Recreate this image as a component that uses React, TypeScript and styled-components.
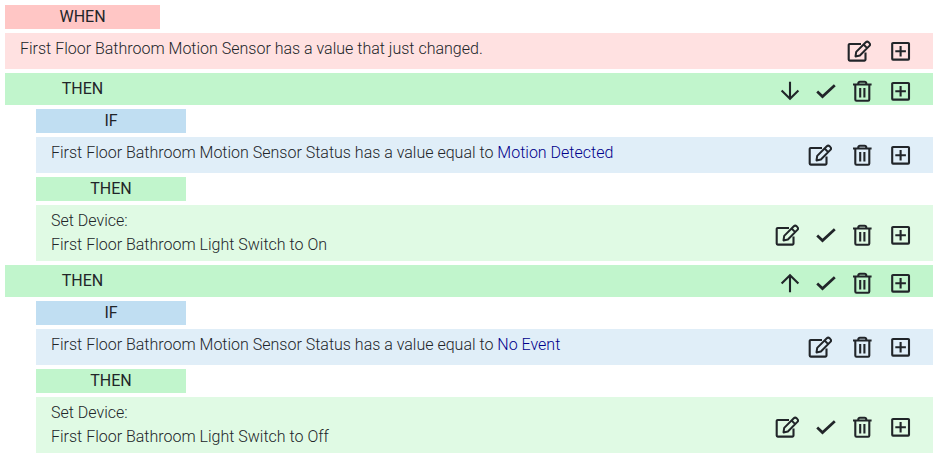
import React from 'react';
import styled, { createGlobalStyle } from 'styled-components';

const GlobalStyle = createGlobalStyle`
  *, *::before, *::after { box-sizing: border-box; }
  body {
    margin: 0;
    background: #fff;
    color: #212529;
    font: 300 16px/24px Roboto, sans-serif;
  }
`;

type Tone = 'red' | 'green' | 'blue';
const strong: Record<Tone, string> = { red: '#ffc6c5', green: '#c1f5cc', blue: '#c0def2' };
const soft: Record<Tone, string> = { red: '#ffe1e1', green: '#e0fae4', blue: '#e0eef8' };

const Rule = styled.main`
  display: flex;
  flex-direction: column;
  gap: 4px;
  padding: 5px;
`;

const Branch = styled.section`
  display: flex;
  flex-direction: column;
  gap: 4px;
`;

const Nested = styled.div`
  display: flex;
  flex-direction: column;
  gap: 4px;
  margin-left: 31px;
`;

const Tag = styled.h3<{ $tone: Tone; $wide?: boolean }>`
  width: ${(p) => (p.$wide ? '155px' : '150px')};
  margin: 0;
  font-size: 16px;
  font-weight: 400;
  text-align: center;
  background: ${(p) => strong[p.$tone]};
`;

const Bar = styled.header<{ $tone: Tone }>`
  display: flex;
  justify-content: space-between;
  padding: 4px 13px 0 0;
  background: ${(p) => strong[p.$tone]};
`;

const Row = styled.div<{ $tone: Tone }>`
  display: flex;
  justify-content: space-between;
  align-items: center;
  padding: 4px 13px 4px 15px;
  background: ${(p) => soft[p.$tone]};
`;

const Sentence = styled.p`
  margin: 0;
  align-self: flex-start;
`;

const Value = styled.span`
  color: #00008b;
`;

const Actions = styled.div<{ $low?: boolean }>`
  display: flex;
  flex-shrink: 0;
  padding-top: ${(p) => (p.$low ? '4px' : '0')};
`;

const IconButton = styled.button<{ $width: number }>`
  display: flex;
  align-items: center;
  justify-content: center;
  width: ${(p) => p.$width}px;
  height: 28px;
  padding: 0;
  border: 0;
  background: none;
  color: inherit;
  cursor: pointer;
`;

const Glyph = styled.svg`
  width: 24px;
  height: 24px;
  flex-shrink: 0;
  fill: none;
  stroke: currentColor;
  stroke-width: 2.1;
  stroke-linejoin: round;
`;

const icons = {
  edit: {
    label: 'Edit',
    width: 44,
    art: (
      <>
        <path d="M14 5H2.7a1 1 0 0 0-1 1v14.6a1 1 0 0 0 1 1h14.8a1 1 0 0 0 1-1v-7" />
        <path
          strokeWidth="2"
          d="M8.5 17.4l.7-4.5L18.8 3.3a2 2 0 0 1 2.8 0l.8.8a2 2 0 0 1 0 2.8L12.9 16.5zM16.6 5.5l3.6 3.6"
        />
      </>
    ),
  },
  down: {
    label: 'Move down',
    width: 39,
    art: <path strokeLinejoin="miter" d="M12 2.7V20M3.6 11.4l8.4 8.4 8.4-8.4" />,
  },
  up: {
    label: 'Move up',
    width: 39,
    art: <path strokeLinejoin="miter" d="M12 21.3V4M3.6 12.6L12 4.2l8.4 8.4" />,
  },
  check: {
    label: 'Enabled',
    width: 33,
    art: <path strokeWidth="2.7" strokeLinejoin="miter" d="M3.2 12.6l5.3 5L20.8 6.2" />,
  },
  trash: {
    label: 'Delete',
    width: 39,
    art: (
      <path d="M3 5.5h18.6M8.3 5V4.4A1.6 1.6 0 0 1 9.9 2.8h4.8a1.6 1.6 0 0 1 1.6 1.6V5M5.3 5.5v15a1.2 1.2 0 0 0 1.2 1.2h11.6a1.2 1.2 0 0 0 1.2-1.2v-15M10.2 9v9.6M14.4 9v9.6" />
    ),
  },
  plus: {
    label: 'Add',
    width: 39,
    art: (
      <>
        <rect x="3.2" y="4" width="16.8" height="16.6" rx="0.8" />
        <path d="M6.3 12.3h10.6M11.6 7v10.6" />
      </>
    ),
  },
};
type Action = keyof typeof icons;

function ActionList({ items, low }: { items: Action[]; low?: boolean }) {
  return (
    <Actions $low={low}>
      {items.map((name) => {
        const { label, width, art } = icons[name];
        return (
          <IconButton key={name} type="button" aria-label={label} $width={width}>
            <Glyph viewBox="0 0 24 24" aria-hidden="true">{art}</Glyph>
          </IconButton>
        );
      })}
    </Actions>
  );
}

function ThenBranch({ move, value, state }: { move: Action; value: string; state: string }) {
  return (
    <Branch>
      <Bar $tone="green">
        <Tag $tone="green" $wide>THEN</Tag>
        <ActionList items={[move, 'check', 'trash', 'plus']} />
      </Bar>
      <Nested>
        <Tag $tone="blue">IF</Tag>
        <Row $tone="blue">
          <Sentence>
            First Floor Bathroom Motion Sensor Status has a value equal to <Value>{value}</Value>
          </Sentence>
          <ActionList items={['edit', 'trash', 'plus']} />
        </Row>
        <Tag $tone="green">THEN</Tag>
        <Row $tone="green">
          <Sentence>
            Set Device:
            <br />
            First Floor Bathroom Light Switch to {state}
          </Sentence>
          <ActionList low items={['edit', 'check', 'trash', 'plus']} />
        </Row>
      </Nested>
    </Branch>
  );
}

export default function App() {
  return (
    <>
      <GlobalStyle />
      <Rule>
        <Tag $tone="red" $wide>WHEN</Tag>
        <Row $tone="red">
          <Sentence>First Floor Bathroom Motion Sensor has a value that just changed.</Sentence>
          <ActionList items={['edit', 'plus']} />
        </Row>
        <ThenBranch move="down" value="Motion Detected" state="On" />
        <ThenBranch move="up" value="No Event" state="Off" />
      </Rule>
    </>
  );
}
